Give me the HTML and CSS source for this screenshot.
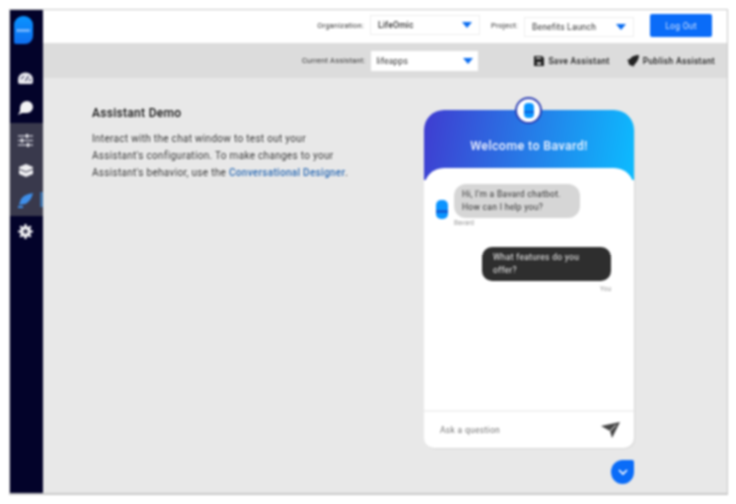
FILE: index.html
```html
<!DOCTYPE html>
<html lang="en">
<head>
    <meta charset="UTF-8">
    <meta name="viewport" content="width=device-width, initial-scale=1.0">
    <title>Assistant Demo</title>
    <link rel="stylesheet" href="styles.css">
</head>
<body>
    <div class="frame">
        <nav class="sidebar">
            <div class="logo"><span class="logo-dots"></span></div>
            <div class="nav-item">
                <svg width="15" height="12" viewBox="0 0 15 12"><path d="M0 10V7.500a7.500 7 0 0 1 15 0V10a2 2 0 0 1-2 2H2a2 2 0 0 1-2-2z" fill="#e8e8ee"/><path d="M3 7l3-3M7.500 9l3-5M11 8h2" stroke="#03032a" fill="none"/></svg>
            </div>
            <div class="nav-item">
                <svg width="15" height="14" viewBox="0 0 15 14"><path d="M9 0a6 6 0 0 1 6 6 6 6 0 0 1-6 6H4l-4 2 2-4V7a7 7 0 0 1 7-7z" fill="#f2f2f5"/></svg>
            </div>
            <div class="nav-group">
                <div class="nav-item">
                    <svg width="15" height="13" viewBox="0 0 15 13"><path d="M0 2h15M0 6.500h15M0 11h15" stroke="#bcbcc6" stroke-width="1.400"/><path d="M9 0v4M4 4.500v4M10 9v4" stroke="#e8e8ee" stroke-width="2"/></svg>
                </div>
                <div class="nav-item">
                    <svg width="14" height="13" viewBox="0 0 14 13"><path d="M7 0l7 3v7l-7 3-7-3V3z" fill="#eeeef2"/><path d="M0 5l7 3 7-3" stroke="#3b3b4d" fill="none"/></svg>
                </div>
                <div class="nav-item nav-active">
                    <svg width="15" height="15" viewBox="0 0 15 15"><path d="M15 0C10 1 6 2 3 6L1 12l6-1c4-2 7-6 8-11z" fill="#3f8fea"/><path d="M0 14h5" stroke="#3f8fea" stroke-width="2"/></svg>
                    <span class="active-bar"></span>
                </div>
            </div>
            <div class="nav-item">
                <svg width="15" height="15" viewBox="0 0 15 15"><circle cx="7.500" cy="7.500" r="5.500" fill="#f2f2f5"/><path d="M7.500 0v15M0 7.500h15M2.200 2.200l10.600 10.600M12.800 2.200L2.200 12.800" stroke="#f2f2f5" stroke-width="2.200"/><circle cx="7.500" cy="7.500" r="2.200" fill="#3c3c54"/></svg>
            </div>
        </nav>

        <div class="content">
            <header class="topbar">
                <span class="field-label">Organization:</span>
                <div class="select select-org"><span>LifeOmic</span><i class="caret"></i></div>
                <span class="field-label">Project:</span>
                <div class="select select-project"><span>Benefits Launch</span><i class="caret"></i></div>
                <button class="logout">Log Out</button>
            </header>

            <div class="toolbar">
                <span class="field-label">Current Assistant:</span>
                <div class="select select-assistant"><span>lifeapps</span><i class="caret"></i></div>
                <a class="tool-link tool-save">
                    <svg width="10" height="10" viewBox="0 0 10 10"><path d="M0 0h8l2 2v8H0z" fill="#222"/><path d="M2 1h5v2H2zM3 6h4v3H3z" fill="#aaa"/></svg>
                    Save Assistant
                </a>
                <a class="tool-link">
                    <svg width="12" height="12" viewBox="0 0 12 12"><path d="M12 0C8 0 5 1 3 4L0 5l2 2-1 1 3 3 1-1 1 2 2-3c2-2 4-5 4-9z" fill="#222"/></svg>
                    Publish Assistant
                </a>
            </div>

            <main class="main">
                <section class="intro">
                    <h1>Assistant Demo</h1>
                    <p>Interact with the chat window to test out your Assistant's configuration. To make changes to your Assistant's behavior, use the <a href="#">Conversational Designer</a>.</p>
                </section>

                <section class="chat-column">
                    <div class="chat">
                        <div class="chat-avatar"><span></span></div>
                        <div class="chat-head">Welcome to Bavard!</div>
                        <div class="chat-body">
                            <div class="msg-bot">
                                <span class="bot-icon"></span>
                                <div>
                                    <div class="bubble bubble-bot">Hi, I'm a Bavard chatbot.<br>How can I help you?</div>
                                    <div class="sender">Bavard</div>
                                </div>
                            </div>
                            <div class="msg-user">
                                <div class="bubble bubble-user">What features do you<br>offer?</div>
                                <div class="sender sender-user">You</div>
                            </div>
                        </div>
                        <div class="chat-input">
                            <span>Ask a question</span>
                            <svg width="19" height="16" viewBox="0 0 19 16"><path d="M0 4l19-4-8 16-2-7z" fill="#444"/><path d="M9 9l6-6" stroke="#fff"/></svg>
                        </div>
                    </div>
                    <div class="chat-toggle">
                        <svg width="12" height="8" viewBox="0 0 12 8"><path d="M2 2l4 4 4-4" stroke="#fff" stroke-width="1.600" fill="none"/></svg>
                    </div>
                </section>
            </main>
        </div>
    </div>
</body>
</html>
```

FILE: styles.css
```css
* {
    box-sizing: border-box;
}

html, body {
    height: 100%;
}

body {
    margin: 0;
    padding: 9px 8px 9px 9px;
    background-color: #fff;
    font-family: Roboto, "Liberation Sans", sans-serif;
    color: #333;
}

.frame {
    display: flex;
    height: 486px;
    border: 1px solid #c9c9c9;
    border-bottom-width: 2px;
    filter: blur(0.9px);
}

/* sidebar */
.sidebar {
    width: 33px;
    flex-shrink: 0;
    background-color: #03032a;
    display: flex;
    flex-direction: column;
    align-items: stretch;
}

.logo {
    width: 19px;
    height: 28px;
    margin: 6px 0 19px 4px;
    border-radius: 9px 9px 8px 2px;
    background: linear-gradient(180deg, #0a94ff, #0f6ff0);
    display: flex;
    align-items: center;
    justify-content: center;
}

.logo-dots {
    width: 13px;
    height: 3px;
    background: repeating-linear-gradient(90deg, #9cc8ff 0 2px, transparent 2px 3px);
}

.nav-item {
    height: 30px;
    display: flex;
    align-items: center;
    justify-content: center;
    position: relative;
    padding-right: 2px;
}

.nav-group {
    background-color: #39394c;
    padding: 2px 0 1px;
}

.active-bar {
    position: absolute;
    right: 0;
    top: 7px;
    width: 3px;
    height: 15px;
    background-color: #3a6ea8;
}

/* bars */
.content {
    flex: 1;
    display: flex;
    flex-direction: column;
    min-width: 0;
    background-color: #e8e8e8;
}

.topbar {
    height: 33px;
    background-color: #fff;
    display: flex;
    align-items: center;
    padding: 0 15px 2px 0;
    justify-content: flex-end;
}

.toolbar {
    height: 35px;
    background-color: #dcdcdc;
    display: flex;
    align-items: center;
    padding-right: 12px;
    justify-content: flex-end;
}

.field-label {
    font-size: 7.500px;
    letter-spacing: 0.2px;
    color: #333;
    margin-right: 6px;
}

.select {
    height: 20px;
    background-color: #fff;
    border: 1px solid #eee;
    display: flex;
    align-items: center;
    justify-content: space-between;
    padding: 0 7px;
    font-size: 8.500px;
    letter-spacing: 0.2px;
    color: #333;
}

.select-org {
    width: 110px;
    margin: 0 11px 1px 0;
}

.select-org span {
    font-weight: 500;
}

.select-project {
    width: 110px;
    margin: 2px 16px 0 0;
}

.select-assistant {
    width: 107px;
    margin-right: 56px;
    padding: 0 5px;
    border: none;
}

.caret {
    width: 0;
    height: 0;
    border-left: 5px solid transparent;
    border-right: 5px solid transparent;
    border-top: 6px solid #0a6cf0;
}

.logout {
    width: 62px;
    height: 23px;
    border: none;
    border-radius: 2px;
    background-color: #0a6cf8;
    color: #cfe2ff;
    font-family: inherit;
    font-size: 8.500px;
    letter-spacing: 0.3px;
}

.tool-link {
    display: flex;
    align-items: center;
    gap: 4px;
    font-size: 8.500px;
    font-weight: 500;
    letter-spacing: 0.35px;
    color: #222;
}

.tool-save {
    margin-right: 17px;
}

/* main area */
.main {
    flex: 1;
    display: flex;
    min-height: 0;
}

.intro {
    width: 381px;
    padding: 28px 0 0 49px;
    flex-shrink: 0;
}

.intro h1 {
    margin: 0 0 10px;
    font-size: 12px;
    font-weight: 500;
    letter-spacing: 0.3px;
    color: #111;
}

.intro p {
    margin: 0;
    width: 260px;
    font-size: 10px;
    line-height: 17px;
    letter-spacing: 0.3px;
    color: #3a3a3a;
}

.intro a {
    color: #2f6db5;
    font-weight: 500;
    text-decoration: none;
}

.chat-column {
    width: 210px;
    padding-top: 32px;
    display: flex;
    flex-direction: column;
    align-items: flex-end;
}

.chat {
    width: 210px;
    height: 338px;
    position: relative;
    display: flex;
    flex-direction: column;
    border-radius: 20px 20px 10px 10px;
    background-color: #fff;
    box-shadow: 1px 1px 1px #d8d8d8;
}

.chat-avatar {
    position: absolute;
    left: 91px;
    top: -13px;
    width: 27px;
    height: 27px;
    border-radius: 50%;
    background-color: #fff;
    border: 2px solid #2c3fb4;
    display: flex;
    align-items: center;
    justify-content: center;
}

.chat-avatar span {
    width: 10px;
    height: 15px;
    border-radius: 4px;
    background: linear-gradient(180deg, #0a94ff 55%, #1060d8 55% 70%, #0a94ff 70%);
}

.chat-head {
    height: 70px;
    padding-top: 28px;
    margin-bottom: -12px;
    border-radius: 20px 20px 0 0;
    background: linear-gradient(100deg, #3f3cd0, #0cbcff);
    color: #f0f4ff;
    font-size: 12.500px;
    font-weight: 500;
    letter-spacing: 0.35px;
    text-align: center;
}

.chat-body {
    flex: 1;
    background-color: #fff;
    border-radius: 20px 20px 0 0;
    padding: 16px 23px 0 12px;
    position: relative;
}

.msg-bot {
    display: flex;
    align-items: center;
    gap: 6px;
}

.bot-icon {
    width: 12px;
    height: 19px;
    margin-top: 8px;
    border-radius: 5px;
    background: linear-gradient(180deg, #0a94ff 55%, #1060d8 55% 70%, #0a94ff 70%);
    flex-shrink: 0;
}

.bubble {
    font-size: 8.500px;
    line-height: 13px;
    letter-spacing: 0.3px;
}

.bubble-bot {
    width: 126px;
    padding: 4px 8px;
    border-radius: 12px;
    background-color: #d6d6d6;
    color: #333;
}

.bubble-user {
    width: 129px;
    padding: 4px 11px;
    border-radius: 10px;
    background-color: #2e2e2e;
    color: #eee;
}

.sender {
    font-size: 6.500px;
    color: #999;
    margin-top: 1px;
}

.sender-user {
    margin-top: 4px;
}

.msg-user {
    margin-top: 20px;
    display: flex;
    flex-direction: column;
    align-items: flex-end;
}

.chat-input {
    height: 38px;
    border-top: 2px solid #f2f2f2;
    border-radius: 0 0 10px 10px;
    display: flex;
    align-items: center;
    justify-content: space-between;
    padding: 0 14px 0 16px;
    font-size: 8.500px;
    letter-spacing: 0.3px;
    color: #777;
}

.chat-toggle {
    width: 23px;
    height: 24px;
    margin-top: 12px;
    border-radius: 50% 2px 50% 50%;
    background-color: #0a6cf8;
    display: flex;
    align-items: center;
    justify-content: center;
}
```
